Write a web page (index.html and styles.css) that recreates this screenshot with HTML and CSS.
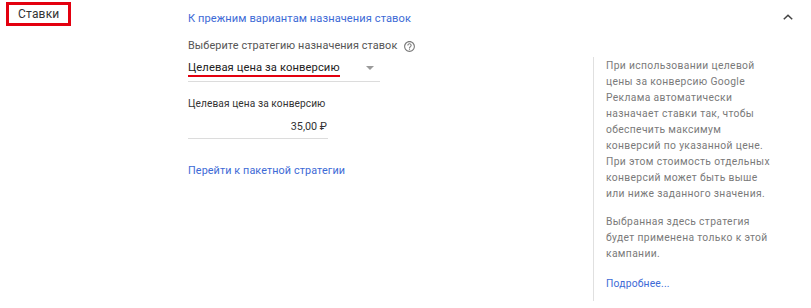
FILE: index.html
```html
<!DOCTYPE html>
<html lang="ru">
<head>
<meta charset="utf-8">
<title>Ставки</title>
<link rel="stylesheet" href="styles.css">
</head>
<body>
<div class="section">
  <div class="title-col">
    <span class="title">Ставки</span>
  </div>
  <div class="head-link-col">
    <a class="link" href="#">К прежним вариантам назначения ставок</a>
  </div>
  <div class="chev-col">
    <svg class="chev" width="12" height="8" viewBox="0 0 12 8"><path d="M1.8 6.3 L6 2.2 L10.2 6.3" fill="none" stroke="#444" stroke-width="1.5"/></svg>
  </div>

  <div class="spacer"></div>
  <div class="form">
    <div class="label-row">
      <span class="label">Выберите стратегию назначения ставок</span>
      <svg class="help" width="13" height="13" viewBox="0 0 24 24"><path fill="#7a7a7a" d="M11 18h2v-2h-2v2zm1-16C6.48 2 2 6.48 2 12s4.48 10 10 10 10-4.480 10-10S17.52 2 12 2zm0 18c-4.410 0-8-3.590-8-8s3.590-8 8-8 8 3.590 8 8-3.590 8-8 8zm0-14c-2.210 0-4 1.790-4 4h2c0-1.100.9-2 2-2s2 .9 2 2c0 2-3 1.750-3 5h2c0-2.250 3-2.500 3-5 0-2.210-1.790-4-4-4z"/></svg>
    </div>
    <div class="select">
      <span class="select-text">Целевая цена за конверсию</span>
      <span class="arrow"></span>
    </div>
    <div class="small-label">Целевая цена за конверсию</div>
    <div class="input">35,00 ₽</div>
    <a class="link link2" href="#">Перейти к пакетной стратегии</a>
  </div>
  <div class="aside">
    <p>При использовании целевой<br>цены за конверсию Google<br>Реклама автоматически<br>назначает ставки так, чтобы<br>обеспечить максимум<br>конверсий по указанной цене.<br>При этом стоимость отдельных<br>конверсий может быть выше<br>или ниже заданного значения.</p>
    <p>Выбранная здесь стратегия<br>будет применена только к этой<br>кампании.</p>
    <a class="link more" href="#">Подробнее...</a>
  </div>
</div>
</body>
</html>
```

FILE: styles.css
```css
html, body {
  margin: 0;
  padding: 0;
  background: #fff;
}
body {
  font-family: Roboto, "Liberation Sans", Arial, sans-serif;
  color: #333;
  width: 811px;
  height: 308px;
  overflow: hidden;
}
.section {
  display: grid;
  grid-template-columns: 188px 405px 1fr;
  grid-template-rows: 57px 251px;
}
.title-col {
  padding: 2px 0 0 6px;
}
.title {
  display: inline-block;
  border: 3px solid #e3000f;
  width: 50px;
  height: 18px;
  padding: 0 0 0 9px;
  font-size: 12px;
  line-height: 18px;
  color: #333;
  letter-spacing: 0.2px;
}
.head-link-col {
  padding-top: 7px;
}
.link {
  color: #3d6ad6;
  text-decoration: none;
  font-size: 11.05px;
  line-height: 16px;
  letter-spacing: 0.1px;
}
.chev-col {
  display: flex;
  justify-content: flex-end;
  padding: 13px 17px 0 0;
}
.chev {
  display: block;
}
.form {
  display: flex;
  flex-direction: column;
  align-items: flex-start;
  margin-top: -19px;
}
.label-row {
  display: flex;
  align-items: center;
  gap: 6px;
  height: 16px;
}
.label {
  font-size: 10.85px;
  line-height: 16px;
  color: #555;
  letter-spacing: 0.1px;
}
.help {
  display: block;
}
.select {
  margin-top: 6px;
  width: 192px;
  height: 22px;
  box-sizing: border-box;
  border-bottom: 1px solid #dcdcdc;
  display: flex;
  align-items: flex-start;
  justify-content: space-between;
}
.select-text {
  font-size: 11.2px;
  line-height: 15px;
  color: #222;
  border-bottom: 2.5px solid #e3000f;
  white-space: nowrap;
  letter-spacing: 0.1px;
}
.arrow {
  width: 0;
  height: 0;
  border-left: 4.5px solid transparent;
  border-right: 4.5px solid transparent;
  border-top: 4.5px solid #9a9a9a;
  margin: 6px 6px 0 0;
}
.small-label {
  margin-top: 14px;
  font-size: 10.15px;
  line-height: 16px;
  color: #333;
  letter-spacing: 0.1px;
}
.input {
  margin-top: 7px;
  width: 140px;
  box-sizing: border-box;
  padding: 0 1px 3px 0;
  text-align: right;
  font-size: 10.8px;
  line-height: 16px;
  color: #333;
  border-bottom: 1px solid #dcdcdc;
}
.link2 {
  margin-top: 24px;
  font-size: 10.8px;
}
.aside {
  border-left: 1px solid #e0e0e0;
  padding: 1px 0 0 12px;
  font-size: 10.3px;
  line-height: 16px;
  color: #7a7a7a;
  letter-spacing: 0.35px;
  white-space: nowrap;
  height: 243px;
}
.aside p {
  margin: 0 0 12px 0;
}
.more {
  font-size: 10.3px;
  line-height: 16px;
  display: block;
  margin-top: 14px;
  letter-spacing: 0.2px;
}
```
